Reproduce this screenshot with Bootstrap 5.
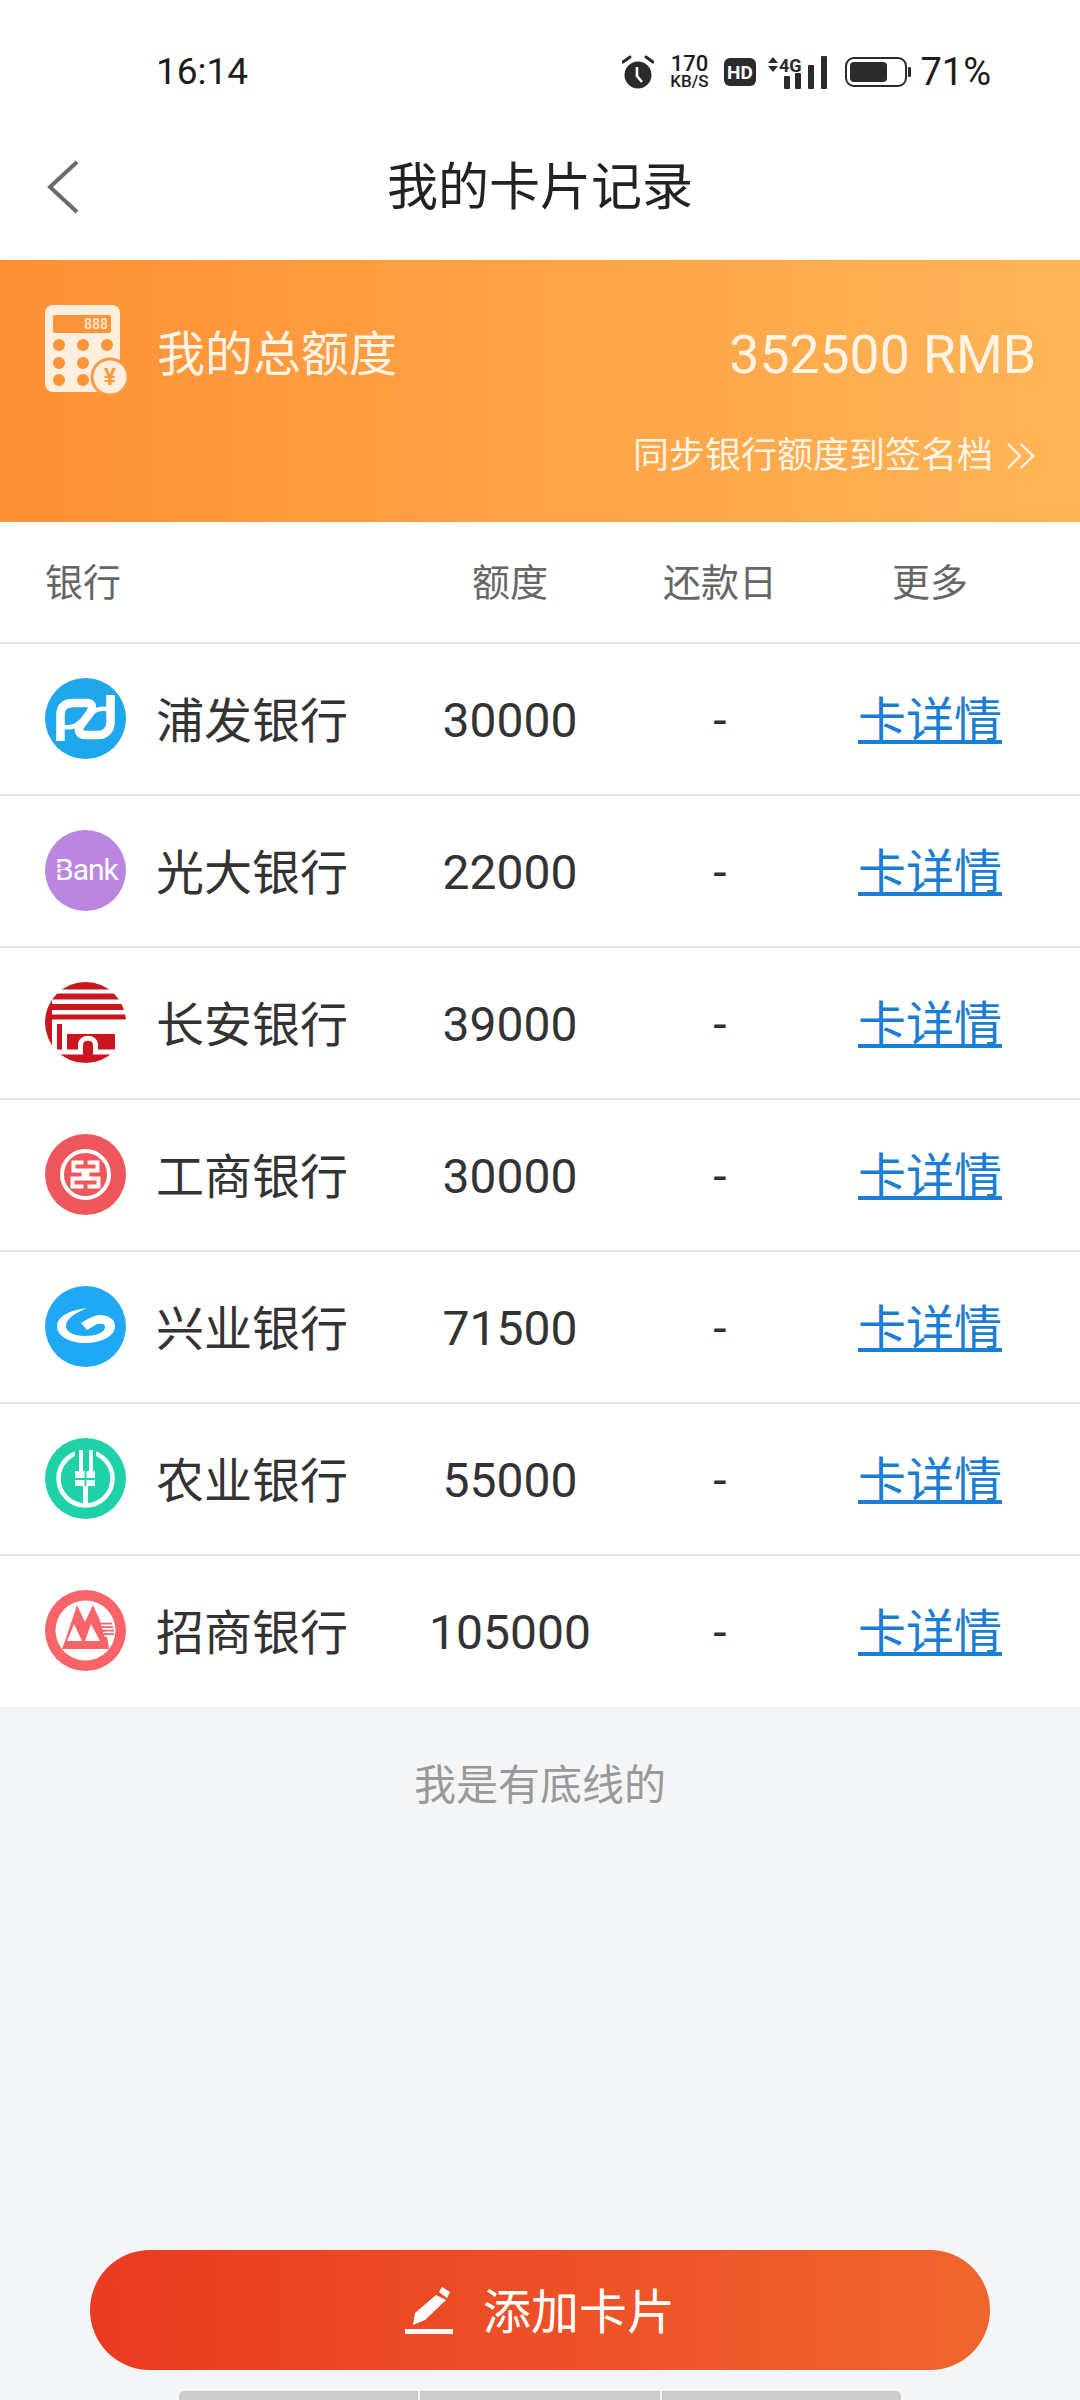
<!DOCTYPE html>
<html lang="zh-CN">
<head>
  <meta charset="UTF-8">
  <meta name="viewport" content="width=device-width, initial-scale=1.0">
  <title>我的卡片记录</title>
  <link href="https://cdn.jsdelivr.net/npm/bootstrap@5.3.0/dist/css/bootstrap.min.css" rel="stylesheet">
  <style>
    body {
      width: 1080px;
      height: 2400px;
      overflow: hidden;
      background: #f4f5f7;
      font-family: Roboto, "Noto Sans CJK SC", sans-serif;
      color: #333;
    }
    svg { display: block; flex: none; }
    .status-bar { height: 110px; padding: 34px 89px 0 156px; align-items: center; color: #1c1c1c; }
    .status-time { font-size: 37px; line-height: 44px; }
    .speed { width: 40px; margin: 0 15px; text-align: center; font-weight: 500; white-space: nowrap; }
    .speed-top { font-size: 22px; line-height: 18px; }
    .speed-unit { font-size: 17px; line-height: 17px; margin: 0 -3px; }
    .gap-net { margin-left: 11px; }
    .gap-batt { margin-left: 17px; }
    .status-pct { font-size: 38px; line-height: 44px; margin-left: 9px; }
    .top-nav { height: 150px; background: #fff; }
    .back-btn { position: absolute; left: 46px; top: 49px; }
    .nav-title { font-size: 51px; font-weight: 400; line-height: 72px; color: #222; margin: 0; padding-top: 42px; }
    .total-banner { height: 262px; padding: 45px 44px 0 45px; background: linear-gradient(90deg, #ff9035, #ffb556); color: #fff4e6; }
    .total-label { font-size: 48px; line-height: 70px; margin-left: 29px; padding-top: 8px; }
    .total-value { font-size: 53.500px; line-height: 70px; padding-top: 8px; }
    .sync-row { margin-top: 31px; font-size: 36px; line-height: 56px; gap: 12px; }
    .bank-list { padding-bottom: 1px; }
    .bank-head { height: 120px; color: #666; font-size: 38px; padding-top: 3px; }
    .bank-row { height: 152px; border-top: 2px solid #e4e4e4; font-size: 48px; }
    .bank-row, .bank-head { padding-left: 45px; padding-right: 45px; }
    .col-name { flex: 1 1 auto; }
    .col-name svg { margin-bottom: 2px; }
    .col-fixed { flex: 0 0 210px; text-align: center; }
    .bank-row .col-fixed { padding-top: 4px; }
    .bank-name { margin-left: 30px; padding-top: 6px; }
    .card-link { color: #1a7ed4; }
    .end-note { margin-top: 50px; line-height: 58px; font-size: 42px; color: #999; text-align: center; }
    .add-btn { width: 900px; height: 120px; border: 0; border-radius: 60px; gap: 30px; background: linear-gradient(90deg, #ea3a22, #f0652d); color: #fff; font-size: 48px; }
    .add-btn:hover, .add-btn:active { background: linear-gradient(90deg, #ea3a22, #f0652d); color: #fff; }
    .add-btn span { padding-top: 5px; }
    .home-bar { width: 722px; height: 9px; margin-top: 21px; gap: 2px; }
    .home-seg { flex: 1 1 0; background: #ccc; }
    .home-seg:first-child { border-top-left-radius: 5px; }
    .home-seg:last-child { border-top-right-radius: 5px; }
  </style>
</head>
<body class="d-flex flex-column">

  <div class="bg-white">
    <div class="status-bar d-flex">
      <div class="status-time">16:14</div>
      <div class="ms-auto d-flex align-items-center">
        <svg width="32" height="34" viewBox="0 0 32 34">
          <circle cx="16" cy="20" r="13.500" fill="#2a2a2a"/>
          <path d="M15 12v9l5 6" fill="none" stroke="#fff" stroke-width="2.600"/>
          <path d="M1 7l7-5M31 7l-7-5" stroke="#2a2a2a" stroke-width="3" stroke-linecap="round"/>
        </svg>
        <div class="speed"><div class="speed-top">170</div><div class="speed-unit">KB/S</div></div>
        <svg width="32" height="28" viewBox="0 0 32 28">
          <rect width="32" height="28" rx="6" fill="#2a2a2a"/>
          <text x="16" y="21" text-anchor="middle" font-family="Roboto" font-weight="700" font-size="19" fill="#fff">HD</text>
        </svg>
        <svg class="gap-net" width="61" height="34" viewBox="0 0 61 34">
          <path d="M1 8l5-6 5 6zM1 11l5 6 5-6z" fill="#2a2a2a"/>
          <text x="12" y="17" font-family="Roboto" font-weight="700" font-size="18" fill="#2a2a2a">4G</text>
          <rect x="17" y="21" width="6" height="13" rx="1" fill="#2a2a2a"/>
          <rect x="28" y="18" width="6" height="16" rx="1" fill="#2a2a2a"/>
          <rect x="41" y="10" width="6" height="24" rx="1" fill="#2a2a2a"/>
          <rect x="54" y="1" width="6" height="33" rx="1" fill="#2a2a2a"/>
        </svg>
        <svg class="gap-batt" width="66" height="30" viewBox="0 0 66 30">
          <rect x="1" y="1" width="60" height="28" rx="8" fill="none" stroke="#2a2a2a" stroke-width="2"/>
          <rect x="5" y="5" width="37" height="20" rx="4" fill="#2a2a2a"/>
          <rect x="63" y="10" width="3" height="10" rx="1" fill="#2a2a2a"/>
        </svg>
        <div class="status-pct">71%</div>
      </div>
    </div>
    <nav class="top-nav position-relative text-center">
      <svg class="back-btn" width="34" height="56" viewBox="0 0 34 56">
        <path d="M31 3L4 28l27 25" fill="none" stroke="#6b6b6b" stroke-width="4"/>
      </svg>
      <h1 class="nav-title">我的卡片记录</h1>
    </nav>
  </div>

  <section class="total-banner">
    <div class="d-flex align-items-center justify-content-between">
      <div class="d-flex align-items-center">
        <svg width="83" height="92" viewBox="15 15 83 92">
          <rect x="15" y="15" width="75" height="87" rx="8" fill="#ffefdf"/>
          <rect x="23" y="25" width="58" height="18" rx="2" fill="#ff9338"/>
          <text x="78" y="39" text-anchor="end" font-family="Roboto" font-size="14" font-weight="700" fill="#ffe3c4">888</text>
          <g fill="#ff9338">
            <circle cx="29" cy="55" r="6"/><circle cx="53" cy="55" r="6"/><circle cx="77" cy="55" r="6"/>
            <circle cx="29" cy="73" r="6"/><circle cx="53" cy="73" r="6"/>
            <circle cx="29" cy="90" r="6"/><circle cx="53" cy="90" r="6"/>
          </g>
          <circle cx="80" cy="87" r="18" fill="#ffefdf" stroke="#ff9a40" stroke-width="3"/>
          <text x="80" y="95" text-anchor="middle" font-family="Roboto" font-size="23" font-weight="700" fill="#ff9a40">¥</text>
        </svg>
        <div class="total-label">我的总额度</div>
      </div>
      <div class="total-value">352500 RMB</div>
    </div>
    <div class="sync-row d-flex align-items-center justify-content-end">
      <span>同步银行额度到签名档</span>
      <svg width="31" height="32" viewBox="0 0 31 32">
        <path d="M3 4l12 12L3 28M16 4l12 12-12 12" fill="none" stroke="#fff4e6" stroke-width="2.400"/>
      </svg>
    </div>
  </section>

  <section class="bg-white bank-list">
    <div class="bank-head d-flex align-items-center">
      <div class="col-name">银行</div>
      <div class="col-fixed">额度</div>
      <div class="col-fixed">还款日</div>
      <div class="col-fixed">更多</div>
    </div>

    <div class="bank-row d-flex align-items-center">
      <div class="col-name d-flex align-items-center">
        <svg width="81" height="81" viewBox="0 0 81 81">
          <circle cx="40.500" cy="40.500" r="40.500" fill="#1fa7ee"/>
          <path d="M15.500 63V36C15.500 28 21 25 28 25H42C48 25 48 31 45 35L36 47C32 52 34 57 41 57H53C60 57 65.500 52 65.500 45V17" fill="none" stroke="#fff" stroke-width="8.500"/>
          <path d="M19 49C26 50 32 48 36 43M62 31C55 30 49 32 45 37" fill="none" stroke="#fff" stroke-width="4.500"/>
        </svg>
        <span class="bank-name">浦发银行</span>
      </div>
      <div class="col-fixed">30000</div>
      <div class="col-fixed">-</div>
      <div class="col-fixed"><a class="card-link" href="#">卡详情</a></div>
    </div>

    <div class="bank-row d-flex align-items-center">
      <div class="col-name d-flex align-items-center">
        <svg width="81" height="81" viewBox="0 0 81 81">
          <circle cx="40.500" cy="40.500" r="40.500" fill="#bb86e0"/>
          <text x="10" y="50" font-family="Roboto" font-size="30" letter-spacing="-1" fill="#fff">Bank</text>
          <path d="M10 33.500h10M10 38.500h10M10 43.500h10" stroke="#bb86e0" stroke-width="1.500"/>
        </svg>
        <span class="bank-name">光大银行</span>
      </div>
      <div class="col-fixed">22000</div>
      <div class="col-fixed">-</div>
      <div class="col-fixed"><a class="card-link" href="#">卡详情</a></div>
    </div>

    <div class="bank-row d-flex align-items-center">
      <div class="col-name d-flex align-items-center">
        <svg width="81" height="81" viewBox="0 0 81 81">
          <circle cx="40.500" cy="40.500" r="40.500" fill="#c9161f"/>
          <path d="M12 7.500H70V11.500H12zM7 17.500H81V22H7zM7 28H81V32.500H7zM7 37.500H81V72H7z" fill="#fff"/>
          <path d="M12 42H17V68H12zM22 52H70V68H22z" fill="#c9161f"/>
          <path d="M12 70H35.500V63C35.500 54 50.500 54 50.500 63V70H76" fill="none" stroke="#fff" stroke-width="5"/>
          <path d="M38 72V64C38 60 48 60 48 64V72z" fill="#c9161f"/>
        </svg>
        <span class="bank-name">长安银行</span>
      </div>
      <div class="col-fixed">39000</div>
      <div class="col-fixed">-</div>
      <div class="col-fixed"><a class="card-link" href="#">卡详情</a></div>
    </div>

    <div class="bank-row d-flex align-items-center">
      <div class="col-name d-flex align-items-center">
        <svg width="81" height="81" viewBox="0 0 81 81">
          <circle cx="40.500" cy="40.500" r="40.500" fill="#ef565b"/>
          <circle cx="40.500" cy="40.500" r="23.500" fill="none" stroke="#fff" stroke-width="4"/>
          <path d="M38.500 28.500H28.500V36.500H38.500V44.500H27.500V52.500H38.500M42.500 28.500H52.500V36.500H42.500V44.500H53.500V52.500H42.500" fill="none" stroke="#fff" stroke-width="4"/>
        </svg>
        <span class="bank-name">工商银行</span>
      </div>
      <div class="col-fixed">30000</div>
      <div class="col-fixed">-</div>
      <div class="col-fixed"><a class="card-link" href="#">卡详情</a></div>
    </div>

    <div class="bank-row d-flex align-items-center">
      <div class="col-name d-flex align-items-center">
        <svg width="81" height="81" viewBox="0 0 81 81">
          <circle cx="40.500" cy="40.500" r="40.500" fill="#1fa8f6"/>
          <path d="M42 22C24 24 12 31 12 40C12 50 24 57 40 57C57 57 70 50 70 40C70 33 63 29 55 29C50 29 44 32 36 37L42 44L52 38C58 37 60 39 60 41C60 47 50 50 40 50C29 50 21 46 21 40C21 33 30 27 42 22z" fill="#fff"/>
        </svg>
        <span class="bank-name">兴业银行</span>
      </div>
      <div class="col-fixed">71500</div>
      <div class="col-fixed">-</div>
      <div class="col-fixed"><a class="card-link" href="#">卡详情</a></div>
    </div>

    <div class="bank-row d-flex align-items-center">
      <div class="col-name d-flex align-items-center">
        <svg width="81" height="81" viewBox="0 0 81 81">
          <circle cx="40.500" cy="40.500" r="40.500" fill="#1fd1a9"/>
          <circle cx="40.500" cy="40.500" r="27" fill="none" stroke="#fff" stroke-width="4.500"/>
          <rect x="30" y="7" width="21" height="22" fill="#1fd1a9"/>
          <path d="M36 12V34M46 12V34" stroke="#fff" stroke-width="4"/>
          <path d="M30 33H50V48H43V67H38V48H30z" fill="#fff"/>
          <path d="M40.500 33V48M30 41H50" stroke="#1fd1a9" stroke-width="1.800"/>
        </svg>
        <span class="bank-name">农业银行</span>
      </div>
      <div class="col-fixed">55000</div>
      <div class="col-fixed">-</div>
      <div class="col-fixed"><a class="card-link" href="#">卡详情</a></div>
    </div>

    <div class="bank-row d-flex align-items-center">
      <div class="col-name d-flex align-items-center">
        <svg width="81" height="81" viewBox="0 0 81 81">
          <circle cx="40.500" cy="40.500" r="40.500" fill="#f9646a"/>
          <circle cx="40.500" cy="40.500" r="30" fill="#fff"/>
          <path d="M32 15L40 32L48 15L62 46L64 59H17L21 48z" fill="#f9646a"/>
          <path d="M22 51L29 34L37 51zM40 51L46 34L55 51z" fill="#fff"/>
          <path d="M55 32H66M56 35.500H68M57 39H69M58 42.500H69M59 46H68" stroke="#fff" stroke-width="1.600"/>
          <path d="M55 33.700H67M56 37.200H68M57 40.700H69M58 44.200H69" stroke="#f9646a" stroke-width="1.800"/>
        </svg>
        <span class="bank-name">招商银行</span>
      </div>
      <div class="col-fixed">105000</div>
      <div class="col-fixed">-</div>
      <div class="col-fixed"><a class="card-link" href="#">卡详情</a></div>
    </div>
  </section>

  <div class="end-note">我是有底线的</div>

  <div class="mt-auto d-flex flex-column align-items-center">
    <button type="button" class="btn add-btn d-flex align-items-center justify-content-center">
      <svg width="48" height="47" viewBox="0 0 48 47">
        <path d="M34 5L37 0L45 5L42 11zM31 8L41 13L20 33L8 38L10 26z" fill="#fff"/>
        <rect y="42" width="48" height="5" fill="#fff"/>
      </svg>
      <span>添加卡片</span>
    </button>
    <div class="home-bar d-flex">
      <div class="home-seg"></div>
      <div class="home-seg"></div>
      <div class="home-seg"></div>
    </div>
  </div>

  <script src="https://cdn.jsdelivr.net/npm/bootstrap@5.3.0/dist/js/bootstrap.bundle.min.js"></script>
</body>
</html>
